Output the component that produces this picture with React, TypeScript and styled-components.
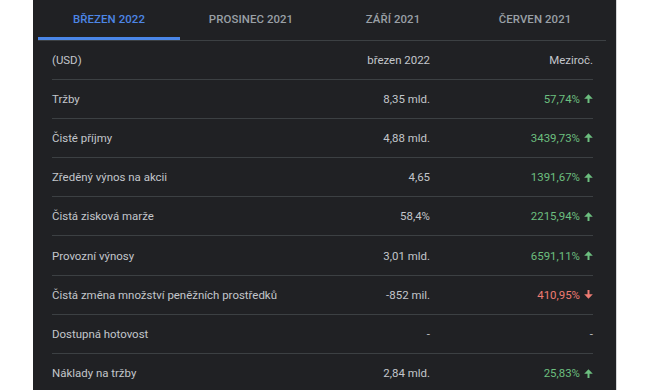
import styled, { createGlobalStyle } from 'styled-components'

const GlobalStyle = createGlobalStyle`
  html, body {
    margin: 0;
    padding: 0;
    background: #ffffff;
  }
  body {
    font-family: Roboto, 'Liberation Sans', Arial, sans-serif;
  }
`

const StyledPanel = styled.div`
  box-sizing: border-box;
  margin-left: 33px;
  width: 584px;
  height: 390px;
  overflow: hidden;
  background: #202124;
  border-right: 1px solid #d5d6d8;
  padding: 0 10px 0 5px;
`

const StyledTabs = styled.div`
  display: grid;
  grid-template-columns: repeat(4, 1fr);
  border-bottom: 1px solid #3c4043;
`

const StyledTab = styled.div<{ $active?: boolean }>`
  position: relative;
  height: 40px;
  display: flex;
  align-items: center;
  justify-content: center;
  font-size: 11.4px;
  font-weight: 500;
  letter-spacing: 0.1px;
  color: ${(props) => (props.$active ? '#4d86e6' : '#9aa0a6')};
  padding-bottom: 2px;
  box-sizing: border-box;

  &::after {
    content: '';
    display: ${(props) => (props.$active ? 'block' : 'none')};
    position: absolute;
    left: 0;
    right: 0;
    bottom: 0;
    height: 3px;
    background: #4a86e8;
  }
`

const StyledTable = styled.div`
  margin: 0 13px 0 14px;
`

const StyledRow = styled.div<{ $header?: boolean }>`
  display: grid;
  grid-template-columns: 1fr 120px 163px;
  align-items: center;
  box-sizing: border-box;
  height: ${(props) => (props.$header ? '38.5px' : '39.24px')};
  border-bottom: 1px solid #3c4043;
  font-size: 11.45px;
  color: #c3c6cb;
`

const StyledCell = styled.div<{ $align?: 'left' | 'right' }>`
  text-align: ${(props) => props.$align ?? 'left'};
  white-space: nowrap;
`

const StyledChange = styled.div<{ $trend?: 'up' | 'down' }>`
  display: flex;
  align-items: center;
  justify-content: flex-end;
  gap: 4px;
  color: ${(props) =>
    props.$trend === 'up' ? '#6cbf7f' : props.$trend === 'down' ? '#ee7b72' : '#c3c6cb'};
`

const StyledArrow = styled.svg<{ $down?: boolean }>`
  flex: none;
  transform: ${(props) => (props.$down ? 'rotate(180deg)' : 'none')};
`

const Arrow = ({ down }: { down?: boolean }) => (
  <StyledArrow $down={down} width='9' height='9' viewBox='0 0 10 10' fill='currentColor'>
    <polygon points='5,0.3 9.8,5.2 0.2,5.2' />
    <rect x='3.9' y='4.5' width='2.2' height='5.5' />
  </StyledArrow>
)

const tabs = ['BŘEZEN 2022', 'PROSINEC 2021', 'ZÁŘÍ 2021', 'ČERVEN 2021']

type Row = {
  label: string
  value: string
  change: string
  trend?: 'up' | 'down'
}

const rows: Row[] = [
  { label: 'Tržby', value: '8,35 mld.', change: '57,74%', trend: 'up' },
  { label: 'Čisté příjmy', value: '4,88 mld.', change: '3439,73%', trend: 'up' },
  { label: 'Zředěný výnos na akcii', value: '4,65', change: '1391,67%', trend: 'up' },
  { label: 'Čistá zisková marže', value: '58,4%', change: '2215,94%', trend: 'up' },
  { label: 'Provozní výnosy', value: '3,01 mld.', change: '6591,11%', trend: 'up' },
  {
    label: 'Čistá změna množství peněžních prostředků',
    value: '-852 mil.',
    change: '410,95%',
    trend: 'down',
  },
  { label: 'Dostupná hotovost', value: '-', change: '-' },
  { label: 'Náklady na tržby', value: '2,84 mld.', change: '25,83%', trend: 'up' },
]

export default function App() {
  return (
    <>
      <GlobalStyle />
      <StyledPanel>
        <StyledTabs>
          {tabs.map((tab, i) => (
            <StyledTab key={tab} $active={i === 0}>
              {tab}
            </StyledTab>
          ))}
        </StyledTabs>
        <StyledTable>
          <StyledRow $header>
            <StyledCell>(USD)</StyledCell>
            <StyledCell $align='right'>březen 2022</StyledCell>
            <StyledCell $align='right'>Meziroč.</StyledCell>
          </StyledRow>
          {rows.map((row) => (
            <StyledRow key={row.label}>
              <StyledCell>{row.label}</StyledCell>
              <StyledCell $align='right'>{row.value}</StyledCell>
              <StyledChange $trend={row.trend}>
                {row.change}
                {row.trend && <Arrow down={row.trend === 'down'} />}
              </StyledChange>
            </StyledRow>
          ))}
        </StyledTable>
      </StyledPanel>
    </>
  )
}
